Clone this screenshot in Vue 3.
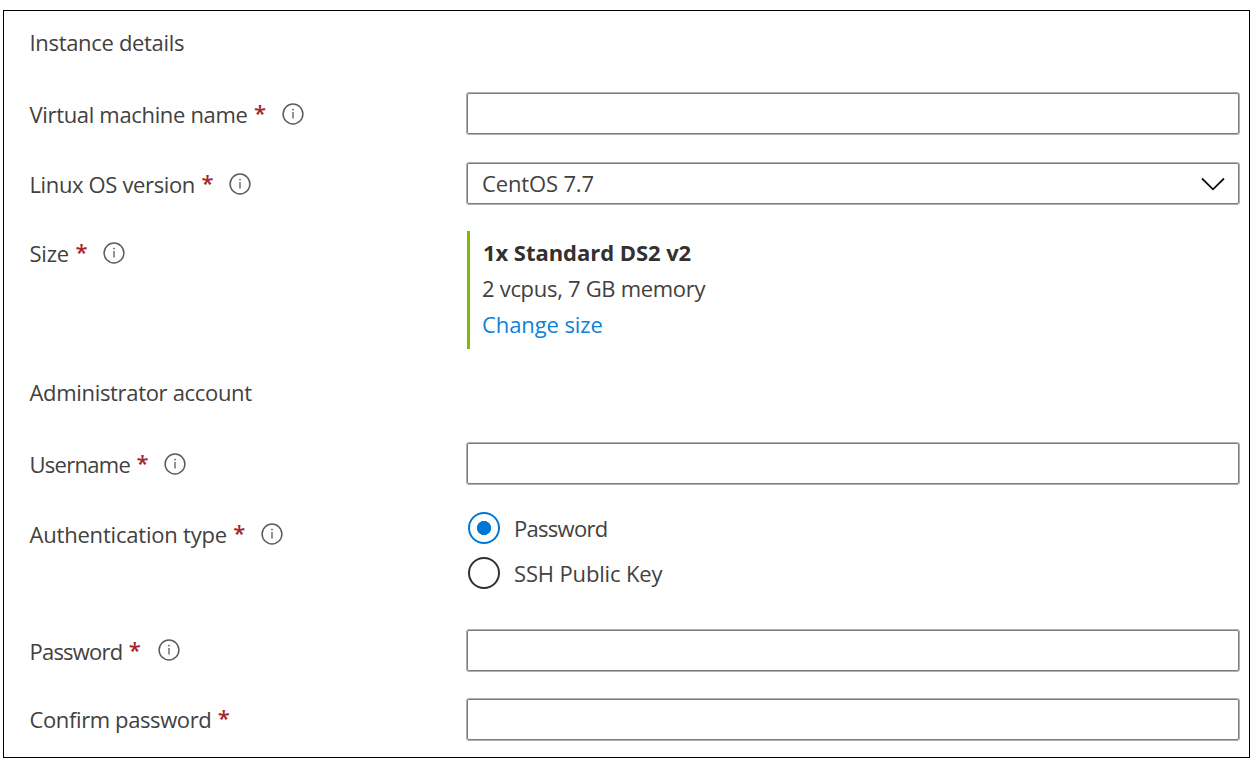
<script setup>
const instance = [
  { id: 'vm', label: 'Virtual machine name', info: true, kind: 'input' },
  { id: 'os', label: 'Linux OS version', info: true, kind: 'select', value: 'CentOS 7.7' },
  { id: 'size', label: 'Size', info: true, kind: 'size' },
]
const account = [
  { id: 'user', label: 'Username', info: true, kind: 'input' },
  { id: 'auth', label: 'Authentication type', info: true, kind: 'radio' },
  { id: 'pass', label: 'Password', info: true, kind: 'input' },
  { id: 'confirm', label: 'Confirm password', info: false, kind: 'input' },
]
const groups = [
  { title: 'Instance details', cls: 'instance', rows: instance },
  { title: 'Administrator account', cls: 'account', rows: account },
]
</script>

<template>
  <main class="panel">
    <section v-for="g in groups" :key="g.cls" :class="['group', g.cls]">
      <h2 class="title"><span>{{ g.title }}</span></h2>
      <div v-for="r in g.rows" :key="r.id" :class="['row', r.id]">
        <div class="label">
          <span class="name">{{ r.label }}</span>
          <span class="star">*</span>
          <svg v-if="r.info" class="info" viewBox="0 0 22 22">
            <circle cx="11" cy="11" r="9.9" fill="none" stroke="#5c5c5c" stroke-width="1.5" />
            <path d="M11 9v6.6" stroke="#666" stroke-width="1.4" />
            <circle cx="11" cy="6.6" r="0.95" fill="#666" />
          </svg>
        </div>
        <div v-if="r.kind === 'input'" class="box"></div>
        <div v-else-if="r.kind === 'select'" class="box select">
          <span class="value">{{ r.value }}</span>
          <svg class="chevron" viewBox="0 0 24 14">
            <path d="M1 1.5L12 12.3L23 1.5" fill="none" stroke="#111" stroke-width="1.8" />
          </svg>
        </div>
        <div v-else-if="r.kind === 'size'" class="sizes">
          <div><strong class="sku">1x Standard DS2 v2</strong></div>
          <div><span class="spec">2 vcpus, 7 GB memory</span></div>
          <div><a class="link">Change size</a></div>
        </div>
        <div v-else class="radios">
          <div class="option"><i class="dot on"></i><span class="opt1">Password</span></div>
          <div class="option"><i class="dot"></i><span class="opt2">SSH Public Key</span></div>
        </div>
      </div>
    </section>
  </main>
</template>

<style>
body {
  background: #fff;
}
</style>

<style scoped>
.panel {
  box-sizing: border-box;
  width: 1247px;
  height: 748px;
  margin: 10px 0 0 3px;
  border: 1px solid #000;
  padding: 13px 9px 0 25.5px;
  font-family: "Open Sans", "Noto Sans", sans-serif;
  font-size: 22px;
  line-height: 36px;
  color: #424140;
  white-space: nowrap;
}
.title {
  margin: 0;
  height: 36px;
  font-size: 22px;
  font-weight: 400;
  letter-spacing: -0.32px;
}
.row {
  display: grid;
  grid-template-columns: 437.5px 772px;
}
.vm { margin-top: 32px; }
.os { margin-top: 28px; }
.size { margin-top: 27px; }
.account { margin-top: 25px; }
.user { margin-top: 32px; }
.auth { margin-top: 28px; }
.pass { margin-top: 39px; }
.confirm { margin-top: 27px; }
.vm .name { letter-spacing: -0.33px; }
.os .name { letter-spacing: -0.36px; }
.size .name { letter-spacing: -0.2px; }
.user .name { letter-spacing: -0.72px; }
.auth .name { letter-spacing: -0.2px; }
.pass .name { letter-spacing: -0.78px; }
.confirm .name { letter-spacing: -0.38px; }
.label {
  display: flex;
  height: 42px;
  padding-top: 4px;
  box-sizing: border-box;
}
.confirm .label {
  padding-top: 3px;
}
.star {
  width: 11px;
  margin: -2px 0 0 6.4px;
  color: #a4262c;
  font-weight: 600;
}
.info {
  width: 22px;
  height: 22px;
  margin: 7px 0 0 17px;
}
.os .info,
.auth .info {
  margin-top: 6.5px;
}
.pass .info {
  margin: 6.4px 0 0 17.8px;
}
.box {
  box-sizing: border-box;
  height: 41px;
  margin-top: 1px;
  border: 1px solid #7c7c7c;
  border-radius: 2px;
  box-shadow: 0 0 0 1px #b0b0b0;
}
.select {
  display: flex;
  justify-content: space-between;
  padding: 1px 13.5px 0 14px;
}
.value { letter-spacing: -0.15px; }
.chevron {
  width: 24px;
  height: 14px;
  margin-top: 12px;
}
.sizes {
  height: 118px;
  box-sizing: border-box;
  border-left: 3px solid #7fba00;
  padding: 3px 0 0 12px;
}
.sku {
  margin-left: 1px;
  font-weight: 700;
  color: #323130;
  letter-spacing: -0.05px;
}
.spec { letter-spacing: -0.3px; }
.link {
  color: #0f7fda;
  letter-spacing: -0.1px;
}
.radios {
  display: flex;
  flex-direction: column;
  gap: 13.4px;
  padding-left: 1px;
}
.option {
  display: flex;
  align-items: center;
  gap: 14px;
  height: 32px;
}
.opt1 { letter-spacing: -0.72px; }
.opt2 { letter-spacing: -0.15px; }
.pass {
  margin-top: 39.6px;
}
.dot {
  box-sizing: border-box;
  width: 32px;
  height: 32px;
  border: 2px solid #323130;
  border-radius: 50%;
}
.on {
  border-color: #0078d4;
  background: radial-gradient(circle, #0078d4 6.8px, transparent 7.4px);
}
</style>
